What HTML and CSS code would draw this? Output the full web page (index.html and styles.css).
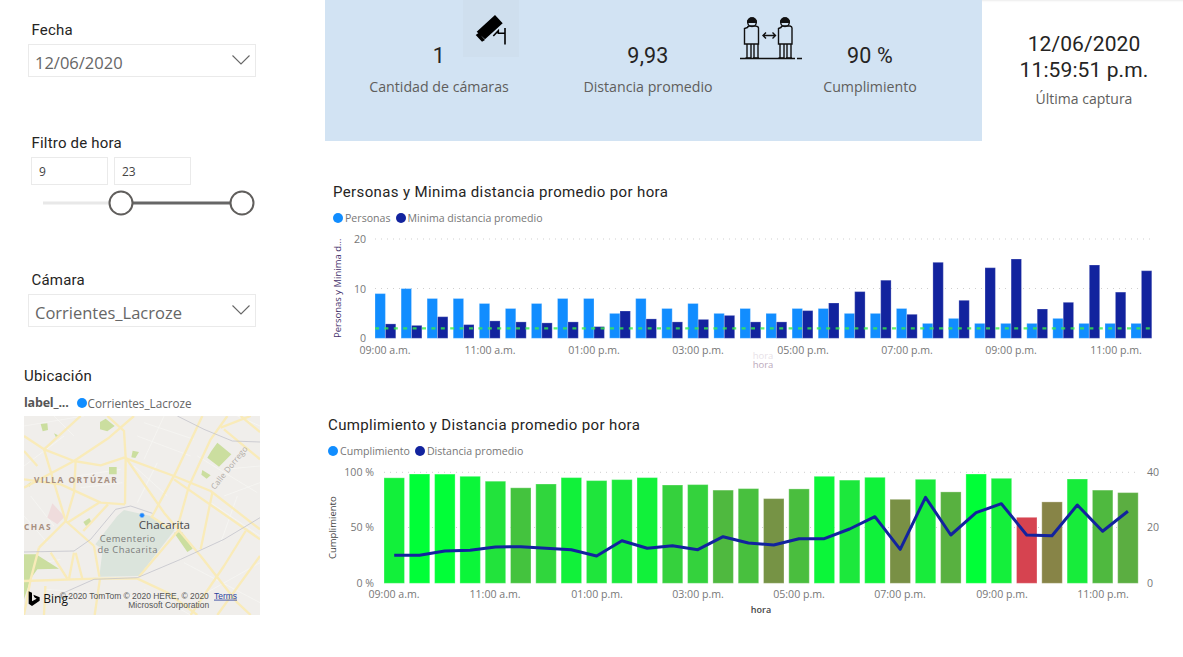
FILE: index.html
```html
<!DOCTYPE html>
<html lang="es">
<head>
<meta charset="utf-8">
<title>Distancia promedio por hora</title>
<link rel="stylesheet" href="styles.css">
</head>
<body>
<div class="page">
  <aside class="sidebar">
    <section class="slicer slicer-fecha">
      <div class="slicer-title">Fecha</div>
      <div class="dropdown">
        <span>12/06/2020</span>
        <svg class="chevron" viewBox="0 0 18 10"><path d="M0.5 0.5 L9 9 L17.5 0.5"/></svg>
      </div>
    </section>
    <section class="slicer slicer-hora">
      <div class="slicer-title">Filtro de hora</div>
      <div class="range-inputs">
        <div class="range-input">9</div>
        <div class="range-input">23</div>
      </div>
      <svg class="range" viewBox="0 0 228 30">
        <line class="track" x1="15" y1="15" x2="93" y2="15"/>
        <line class="track-on" x1="93" y1="15" x2="214" y2="15"/>
        <circle class="thumb" cx="93" cy="15" r="11.5"/>
        <circle class="thumb" cx="214" cy="15" r="11.5"/>
      </svg>
    </section>
    <section class="slicer slicer-camara">
      <div class="slicer-title">Cámara</div>
      <div class="dropdown">
        <span>Corrientes_Lacroze</span>
        <svg class="chevron" viewBox="0 0 18 10"><path d="M0.5 0.5 L9 9 L17.5 0.5"/></svg>
      </div>
    </section>
    <section class="location">
      <div class="location-title">Ubicación</div>
      <div class="location-legend">
        <b>label_...</b>
        <i class="dot dot-blue"></i>
        <span>Corrientes_Lacroze</span>
      </div>
      <svg class="map" viewBox="0 0 708 597">
        <rect class="m-bg" width="708" height="597"/>
        <g class="m-minor">
          <path d="M0 30L180 0M0 150L120 60M160 180L290 160M170 215L295 200M330 150L430 240M340 60L500 120M360 20L510 70M520 120L700 230M560 260L708 360M20 240L90 330M0 300L70 380M60 440L110 430M480 440L708 560M530 540L708 440M360 520L500 597M240 540L400 550M60 520L200 530M600 160L708 150M600 240L708 200M150 60L90 0M420 0L360 130M400 140L340 260M640 0L708 30M640 240L590 380"/>
        </g>
        <path class="m-cem" d="M300 282L380 300L452 342L345 480L226 482L236 400L214 385L280 300Z"/>
        <path class="m-park" d="M50 24L70 22L72 42L56 46ZM90 52L102 58L98 68ZM228 18L245 8L272 30L250 46L228 40ZM255 153L278 153L278 175L255 175ZM326 104L345 108L334 126L322 124ZM580 80L622 115L585 152L550 125L562 105ZM535 162L560 178L548 188L532 176ZM450 350L474 348L506 398L490 408ZM0 415L36 415L105 458L40 460L20 488L0 550ZM178 318L196 306L202 318L186 330ZM10 206L20 198L18 212Z"/>
        <path class="m-pink" d="M85 262L122 302L100 325L70 305Z"/>
        <g class="m-road">
          <path d="M0 60L60 100L150 135L230 148L300 125L450 180L560 225L708 340"/>
          <path d="M330 0L255 65L150 135L0 215"/>
          <path d="M170 0L60 100"/>
          <path d="M250 0L300 45L305 125L303 265"/>
          <path d="M305 125L420 290L530 420L640 560L680 597"/>
          <path d="M155 135L150 230L125 315L45 395"/>
          <path d="M60 100L125 315L210 390"/>
          <path d="M0 190L110 205L230 260L303 265"/>
          <path d="M535 0L455 170L385 300"/>
          <path d="M610 0L560 70L495 210L460 335"/>
          <path d="M708 130L600 40M565 230L530 400"/>
          <path d="M450 190L708 370M590 35L680 0"/>
          <path d="M0 495L215 488L340 488L430 530L520 597"/>
          <path d="M45 395L20 490L0 597"/>
          <path d="M80 410L130 488M150 410L135 488M155 410L175 488"/>
          <path d="M665 345L600 450L500 597M708 420L580 597"/>
          <path d="M228 488L212 597M60 597L64 510"/>
          <path d="M225 260L130 320M252 265L178 345"/>
          <path d="M210 390L226 482M470 335L345 482"/>
          <path d="M650 0L708 48M0 105L40 150"/>
          <path d="M380 300L440 340"/>
        </g>
        <g class="m-rail">
          <path d="M460 0L540 40L625 75L708 78"/>
          <path d="M0 408L150 405L200 370L275 280L320 270L385 292"/>
          <path d="M708 305L600 370L470 430L340 485L210 490L120 530"/>
        </g>
        <text class="m-area" x="30" y="201">VILLA ORTÚZAR</text>
        <text class="m-area" x="0" y="342">CHAS</text>
        <text class="m-city" x="344" y="339">Chacarita</text>
        <text class="m-poi" x="311" y="379" text-anchor="middle">Cementerio</text>
        <text class="m-poi" x="311" y="412" text-anchor="middle">de Chacarita</text>
        <text class="m-street" transform="translate(572 222) rotate(-51)">Calle Dorrego</text>
        <circle class="m-pin" cx="354" cy="298" r="7"/>
        <path class="m-bing" d="M14 526L24 530V556L38 548L31 544L28 536L47 544V554L24 570L14 563Z"/>
        <text class="m-bing-t" x="58" y="560">Bing</text>
        <text class="m-copy" x="107" y="548">© 2020 TomTom © 2020 HERE, © 2020</text>
        <text class="m-copy m-terms" x="570" y="548">Terms</text>
        <text class="m-copy" x="313" y="576">Microsoft Corporation</text>
      </svg>
    </section>
  </aside>

  <main class="main">
    <div class="top">
      <div class="band">
        <div class="kpi"><div class="kpi-value">1</div><div class="kpi-label">Cantidad de cámaras</div></div>
        <div class="kpi"><div class="kpi-value">9,93</div><div class="kpi-label">Distancia promedio</div></div>
        <div class="kpi"><div class="kpi-value">90 %</div><div class="kpi-label">Cumplimiento</div></div>
        <svg class="icon-camera" viewBox="0 0 56 57">
          <rect class="tile" width="56" height="57"/>
          <path class="ink" d="M13.700 31.700L32 15L39.700 23.300L22 39.300ZM12.700 35L15.500 33L22 40L19 41.700Z"/>
          <path class="ink-line" d="M30.300 36L35.300 30.700V33.300H42M42 28V44.500"/>
        </svg>
        <svg class="icon-people" viewBox="0 0 64 48">
          <g class="ink-thin">
            <path d="M7.500 12.500Q7.500 11.500 9 11H15.500Q18.500 11.500 18.500 13V29H4.500V13.500Z"/>
            <circle cx="12" cy="7.300" r="4.300"/>
            <path class="hair" d="M7.700 7.300A4.300 4.300 0 0 1 16.300 7.300Z"/>
            <path d="M7 29V43M11 29V43M14 29V43M18 29V43M5.500 43H10.500M13 43H19"/>
            <path d="M41 12.500Q41 11.500 42.500 11H50Q52 11.500 52 13V29H38.500V13.500Z"/>
            <circle cx="45" cy="7.300" r="4.300"/>
            <path class="hair" d="M40.700 7.300A4.300 4.300 0 0 1 49.300 7.300Z"/>
            <path d="M40 29V43M44 29V43M47 29V43M51 29V43M38.500 43H44M46 43H52"/>
            <path d="M23 20.500H35.500M26 17.500L23 20.500L26 23.500M32.500 17.500L35.500 20.500L32.500 23.500"/>
            <path d="M0 43.500H55M57 43.500H62"/>
          </g>
        </svg>
      </div>
      <div class="capture">
        <div class="capture-value">12/06/2020</div>
        <div class="capture-value">11:59:51 p.m.</div>
        <div class="capture-label">Última captura</div>
      </div>
    </div>

    <section class="chart chart-one">
      <h2 class="chart-title">Personas y Minima distancia promedio por hora</h2>
      <div class="legend">
        <i class="dot dot-blue"></i><span>Personas</span>
        <i class="dot dot-navy"></i><span>Minima distancia promedio</span>
      </div>
      <svg class="plot plot-one" id="plot-one" viewBox="325 232 858 140">
        <line class="grid" x1="375" y1="239" x2="1150" y2="239"/>
        <line class="grid" x1="375" y1="288.500" x2="1150" y2="288.500"/>
        <g id="bars-one"></g>
        <line class="constant" x1="375" y1="328.300" x2="1152" y2="328.300"/>
        <text class="tick" x="366" y="243" text-anchor="end">20</text>
        <text class="tick" x="366" y="293" text-anchor="end">10</text>
        <text class="tick" x="366" y="342" text-anchor="end">0</text>
        <text class="axis-title" transform="translate(341 338) rotate(-90)">Personas y Minima d...</text>
        <text class="tick" x="385" y="354" text-anchor="middle">09:00 a.m.</text>
        <text class="tick" x="490" y="354" text-anchor="middle">11:00 a.m.</text>
        <text class="tick" x="594" y="354" text-anchor="middle">01:00 p.m.</text>
        <text class="tick" x="698" y="354" text-anchor="middle">03:00 p.m.</text>
        <text class="tick" x="803" y="354" text-anchor="middle">05:00 p.m.</text>
        <text class="tick" x="907" y="354" text-anchor="middle">07:00 p.m.</text>
        <text class="tick" x="1011" y="354" text-anchor="middle">09:00 p.m.</text>
        <text class="tick" x="1116" y="354" text-anchor="middle">11:00 p.m.</text>
        <text class="ghost ghost-back" x="763" y="359" text-anchor="middle">hora</text>
        <text class="ghost" x="763" y="368" text-anchor="middle">hora</text>
      </svg>
    </section>

    <section class="chart chart-two">
      <h2 class="chart-title">Cumplimiento y Distancia promedio por hora</h2>
      <div class="legend">
        <i class="dot dot-blue"></i><span>Cumplimiento</span>
        <i class="dot dot-navy"></i><span>Distancia promedio</span>
      </div>
      <svg class="plot plot-two" id="plot-two" viewBox="325 460 858 160">
        <line class="grid" x1="384" y1="472.300" x2="1140" y2="472.300"/>
        <line class="grid" x1="384" y1="527.500" x2="1140" y2="527.500"/>
        <g id="bars-two"></g>
        <polyline class="trend" id="trend" points=""/>
        <text class="tick" x="374" y="476" text-anchor="end">100 %</text>
        <text class="tick" x="374" y="531" text-anchor="end">50 %</text>
        <text class="tick" x="374" y="587" text-anchor="end">0 %</text>
        <text class="tick" x="1147" y="476">40</text>
        <text class="tick" x="1147" y="531">20</text>
        <text class="tick" x="1147" y="587">0</text>
        <text class="axis-title axis-title-two" transform="translate(336 559) rotate(-90)">Cumplimiento</text>
        <text class="tick" x="394" y="598" text-anchor="middle">09:00 a.m.</text>
        <text class="tick" x="495" y="598" text-anchor="middle">11:00 a.m.</text>
        <text class="tick" x="597" y="598" text-anchor="middle">01:00 p.m.</text>
        <text class="tick" x="698" y="598" text-anchor="middle">03:00 p.m.</text>
        <text class="tick" x="799" y="598" text-anchor="middle">05:00 p.m.</text>
        <text class="tick" x="900" y="598" text-anchor="middle">07:00 p.m.</text>
        <text class="tick" x="1002" y="598" text-anchor="middle">09:00 p.m.</text>
        <text class="tick" x="1103" y="598" text-anchor="middle">11:00 p.m.</text>
        <text class="axis-hora" x="761" y="613" text-anchor="middle">hora</text>
      </svg>
    </section>
  </main>
</div>
<script src="charts.js"></script>
</body>
</html>
```

FILE: styles.css
```css
* { box-sizing: border-box; }
html, body { margin: 0; padding: 0; background: #fff; }
body { width: 1183px; height: 657px; overflow: hidden; font-family: "Open Sans", "Liberation Sans", sans-serif; color: #252423; }
.page { display: grid; grid-template-columns: 325px 858px; height: 657px; }

/* Sidebar */
.sidebar { display: flex; flex-direction: column; }
.slicer { margin-left: 28px; width: 228px; }
.slicer-fecha { margin-top: 20px; }
.slicer-hora { margin-top: 56px; }
.slicer-camara { margin-top: 52px; }
.slicer-title { font-family: Roboto, sans-serif; font-size: 15px; line-height: 20px; padding-left: 3.5px; letter-spacing: .2px; color: #252423; margin-bottom: 4px; }
.dropdown { height: 33px; border: 1px solid #eaeaea; display: flex; align-items: center; justify-content: space-between; padding: 4px 5px 0 6px; font-size: 16.500px; color: #666; }
.chevron { width: 18px; height: 10px; margin-top: -5px; fill: none; stroke: #666; stroke-width: 1.100; }
.range-inputs { display: flex; gap: 6px; margin: -4px 0 0 3px; padding-top: 4px; }
.range-input { width: 77px; height: 28px; border: 1px solid #eaeaea; font-size: 12px; line-height: 27px; padding-left: 7px; color: #444; }
.range { display: block; width: 228px; height: 30px; margin-top: 3px; }
.track { stroke: #e8e8e8; stroke-width: 3; }
.track-on { stroke: #666; stroke-width: 3; }
.thumb { fill: #fff; stroke: #605e5c; stroke-width: 2; }

.location { margin: 39px 0 0 24px; }
.location-title { font-family: Roboto, sans-serif; font-size: 15px; line-height: 20px; letter-spacing: .2px; }
.location-legend { display: flex; align-items: center; font-size: 11.700px; line-height: 16px; margin-top: 9px; color: #666; }
.location-legend b { color: #555; margin-right: 8px; font-size: 12.500px; letter-spacing: -.2px; }
.location-legend .dot { margin-right: 1px; }
.map { display: block; width: 236px; height: 199px; margin-top: 5px; }

.dot { display: block; flex: none; width: 10px; height: 10px; border-radius: 50%; }
.dot-blue { background: #118dff; }
.dot-navy { background: #12239e; }

/* Map */
.m-bg { fill: #f0eeeb; }
.m-minor path { fill: none; stroke: #f8f7f5; stroke-width: 2; }
.m-cem { fill: #dbe4dc; }
.m-park { fill: #cbde9f; }
.m-pink { fill: #efdcdc; }
.m-road path { fill: none; stroke: #f9ebb9; stroke-width: 7; stroke-linejoin: round; }
.m-rail path { fill: none; stroke: #c5c5cc; stroke-width: 2.500; }
.m-area { font: bold 25px "Open Sans", sans-serif; letter-spacing: 4.500px; fill: #a78f80; }
.m-city { font: 35px "Open Sans", sans-serif; fill: #4a4a4a; }
.m-poi { font: 28px "Open Sans", sans-serif; letter-spacing: 1.500px; fill: #7a7a7a; }
.m-street { font: 24px "Open Sans", sans-serif; letter-spacing: .5px; fill: #b0aca6; }
.m-pin { fill: #1a84ff; stroke: #8fbfee; stroke-width: 2; }
.m-bing { fill: #000; }
.m-bing-t { font: 36px "Open Sans", sans-serif; fill: #111; }
.m-copy { font: 25.400px "Liberation Sans", sans-serif; fill: #555; }
.m-terms { fill: #2a3f9c; text-decoration: underline; }

/* KPI band */
.main { display: flex; flex-direction: column; }
.top { display: flex; height: 141px; }
.band { position: relative; width: 657px; height: 141px; background: #d2e3f3; padding: 43px 0 0 24px; display: grid; grid-template-columns: 180px 190px 206px; column-gap: 24px; align-content: start; }
.kpi { text-align: center; }
.kpi-value { font-family: Roboto, sans-serif; font-size: 21.500px; line-height: 26px; letter-spacing: .2px; color: #252423; }
.kpi-label { font-size: 14.200px; line-height: 20px; margin-top: 8px; color: #605e5c; white-space: nowrap; }
.icon-camera { position: absolute; left: 138px; top: 0; width: 56px; height: 57px; }
.icon-people { position: absolute; left: 415px; top: 15px; width: 64px; height: 48px; }
.tile { fill: #cfdfee; }
.ink { fill: #000; }
.ink-line { fill: none; stroke: #000; stroke-width: 1.600; }
.ink-thin { fill: none; stroke: #111; stroke-width: 1.400; }
.ink-thin .hair { fill: #111; }

.capture { width: 201px; height: 141px; padding: 31px 0 0 3px; text-align: center; box-shadow: inset 0 3px 3px -3px #d8d8d8; }
.capture-value { font-family: Roboto, sans-serif; font-size: 21px; line-height: 26px; letter-spacing: .1px; color: #252423; }
.capture-label { font-size: 14px; line-height: 20px; margin-top: 6px; color: #605e5c; }

/* Charts */
.chart-title { margin: 0; font-family: Roboto, sans-serif; font-weight: 400; font-size: 15px; line-height: 20px; letter-spacing: .37px; color: #252423; white-space: nowrap; }
.chart-one { margin-top: 41px; }
.chart-one .chart-title { padding-left: 8px; }
.chart-two { margin-top: 43px; }
.chart-two .chart-title { padding-left: 3px; }
.legend { display: flex; align-items: center; font-size: 10.600px; line-height: 16px; color: #777; margin-top: 8px; }
.chart-one .legend { padding-left: 8px; }
.chart-two .legend { padding-left: 3px; margin-top: 8px; }
.legend .dot { margin-right: 2px; }
.legend span { margin-right: 5px; }
.plot { display: block; width: 858px; }
.plot-one { height: 140px; margin-top: 6px; }
.plot-two { height: 160px; margin-top: 1px; }
.grid { stroke: #cfcfcf; stroke-width: 1; stroke-dasharray: 1 5; }
.bar-p { fill: #118dff; stroke: rgba(255,255,255,.25); }
.bar-d { fill: #12239e; stroke: rgba(255,255,255,.25); }
.bar-c { stroke: rgba(255,255,255,.3); }
.constant { stroke: #38f04a; stroke-width: 2.200; stroke-dasharray: 4 5.400; opacity: .8; }
.trend { fill: none; stroke: #12239e; stroke-width: 3; stroke-linejoin: round; }
.tick { font: 10.600px "Open Sans", sans-serif; fill: #777; }
.axis-title { font: 9.500px "Open Sans", sans-serif; fill: #43306b; }
.axis-title-two { fill: #444; }
.axis-hora { font: 9px "Open Sans", sans-serif; fill: #444; font-weight: 600; }
.ghost { font: 9.500px "Open Sans", sans-serif; fill: #bba9bb; }
.ghost-back { opacity: .35; }
```

FILE: charts.js
```js
var SVG_NS = "http://www.w3.org/2000/svg";

function addRect(parent, cls, x, y, w, h, fill) {
  var r = document.createElementNS(SVG_NS, "rect");
  r.setAttribute("class", cls);
  r.setAttribute("x", x.toFixed(1));
  r.setAttribute("y", y.toFixed(1));
  r.setAttribute("width", w.toFixed(1));
  r.setAttribute("height", h.toFixed(1));
  if (fill) r.setAttribute("fill", fill);
  parent.appendChild(r);
}

var personas = [9,10,8,8,7,6,7,8,8,5,8,6,7,5,6,5,6,6,5,5,6,3,4,3,3,3,4,3,3,3];
var minima = [2.9,2.6,4.35,2.75,3.5,3.3,3.1,3.3,2.35,5.5,3.9,3.3,3.8,4.6,3.3,3.3,5.57,7.1,9.4,11.7,4.83,15.3,7.65,14.2,15.96,5.9,7.25,14.75,9.3,13.6];
var barsOne = document.getElementById("bars-one");
personas.forEach(function (v, i) {
  var x = 375 + 26.07 * i;
  var h1 = v * 4.97, h2 = minima[i] * 4.97;
  addRect(barsOne, "bar-p", x, 338.3 - h1, 10.4, h1);
  addRect(barsOne, "bar-d", x + 10.4, 338.3 - h2, 10.4, h2);
});

var cumplimiento = [95,98.5,98.4,96.4,92,86,89.5,95.2,92.5,93.4,95.2,88.6,88.9,84,85.3,76.3,85,96.4,93,95.5,75.7,93.7,82.3,98.5,94.6,59.5,73.3,94,84,81.7];
var stops = [[59.5,214,67,80],[75,125,140,70],[85,74,190,62],[93,28,232,60],[98.5,0,255,55]];
function colorFor(v) {
  for (var s = 1; s < stops.length; s++) {
    if (v <= stops[s][0]) {
      var a = stops[s - 1], b = stops[s], t = (v - a[0]) / (b[0] - a[0]);
      return "rgb(" + [1, 2, 3].map(function (k) { return Math.round(a[k] + (b[k] - a[k]) * t); }).join(",") + ")";
    }
  }
  return "rgb(0,255,55)";
}
var barsTwo = document.getElementById("bars-two");
cumplimiento.forEach(function (v, i) {
  var h = v * 1.11;
  addRect(barsTwo, "bar-c", 384 + 25.3 * i, 583.3 - h, 20.5, h, colorFor(v));
});

var trendY = [555.3,555.3,551,550.3,547,546.7,548.3,549.7,556,540.7,548.3,545.7,549.7,536.7,543,545,538.7,538.7,529,516.7,549.3,497.3,535,512.7,503.7,535,535.7,505,531.3,511.3];
var pts = trendY.map(function (y, i) { return (394.2 + 25.3 * i).toFixed(1) + "," + y; }).join(" ");
document.getElementById("trend").setAttribute("points", pts);
```
